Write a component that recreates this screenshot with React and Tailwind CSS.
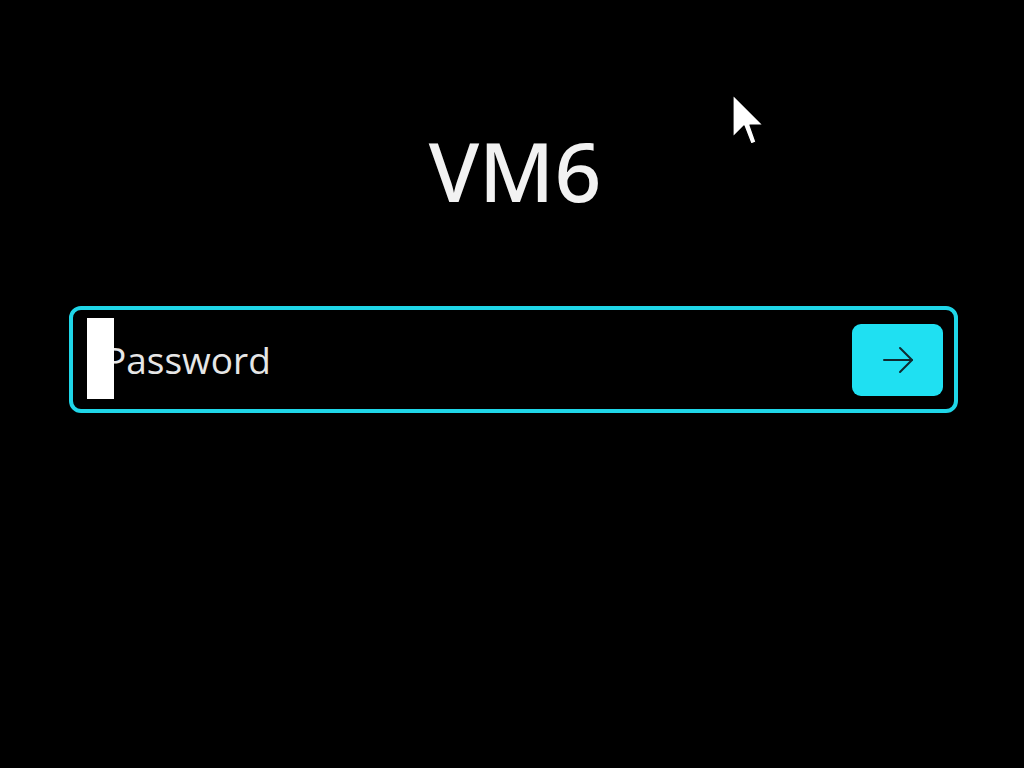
export default function App() {
  return (
    <div className="relative w-[1024px] h-[768px] bg-black overflow-hidden" style={{ fontFamily: '"Open Sans", "Noto Sans", sans-serif' }}>
      <div className="flex flex-col">
        <div className="h-[120px]" />
        <h1 className="text-center text-[82px] leading-[100px] text-[#f2f2f2] font-medium ml-[6px]" style={{ fontFamily: '"Noto Sans", "Open Sans", sans-serif' }}>VM6</h1>
        <div className="h-[86px]" />
        <div className="relative ml-[69px] w-[889px] h-[107px] border-[4px] border-[#1fd6e8] rounded-[12px] flex items-center pr-[11px]">
          <span className="ml-[31px] text-[37px] text-[#e6e6e6] leading-none">Password</span>
          <div className="absolute left-[14px] top-[8px] w-[27px] h-[81px] bg-white" />
          <div className="ml-auto w-[91px] h-[72px] rounded-[9px] bg-[#1fe0f2] flex items-center justify-center">
            <svg width="40" height="40" viewBox="0 0 40 40" fill="none" stroke="#0f2a30" strokeWidth="2" strokeLinecap="round" strokeLinejoin="round">
              <path d="M6 20 H34" />
              <path d="M22 8 L34 20 L22 32" />
            </svg>
          </div>
        </div>
      </div>
      <svg className="absolute left-[732px] top-[94px]" width="36" height="54" viewBox="0 0 36 54">
        <path d="M1 1 L1 43 L12 32 L19 50 L24 48 L18 31 L31 31 Z" fill="#ffffff" stroke="#000" strokeWidth="1.2" strokeLinejoin="round" />
      </svg>
    </div>
  );
}
